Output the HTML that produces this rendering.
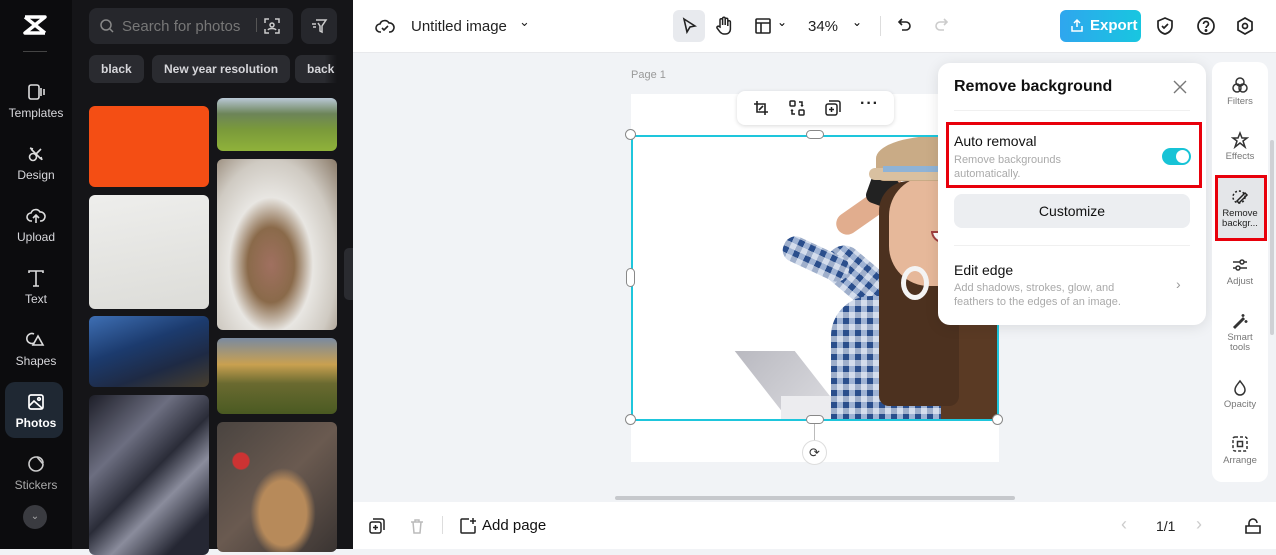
<!DOCTYPE html>
<html><head><style>
*{box-sizing:border-box;margin:0;padding:0}
body{width:1276px;height:549px;overflow:hidden;font-family:"Liberation Sans",sans-serif;background:#f1f3f6;position:relative}
.abs{position:absolute}
#nav{left:0;top:0;width:72px;height:549px;background:#0c0c0e}
#panel{left:72px;top:0;width:281px;height:549px;background:#151518}
.ni{position:absolute;left:0;width:72px;text-align:center;color:#d8d8dc;font-size:12px}
.ni svg{display:block;margin:0 auto 4px}
.chip{position:absolute;top:55px;height:28px;background:#2a2b30;border-radius:7px;color:#d6d6da;font-size:12px;line-height:28px;padding:0 12px;font-weight:bold}
.ph{position:absolute;border-radius:6px;overflow:hidden}
#top{left:353px;top:0;width:923px;height:53px;background:#fff;border-bottom:1px solid #e8e9ec}
#bot{left:353px;top:502px;width:923px;height:47px;background:#fff}
.rs{position:absolute;left:0;width:56px;text-align:center;font-size:9.5px;color:#777;line-height:10px}
.rs svg{display:block;margin:0 auto 3px}
.h{position:absolute;width:11px;height:11px;border-radius:50%;background:#fff;border:1px solid #888}
.chk{background:repeating-linear-gradient(0deg,rgba(255,255,255,.55) 0 6px,transparent 6px 12px),repeating-linear-gradient(90deg,#2a4e8c 0 6px,#9fb3d4 6px 12px)}
</style></head><body>
<div id="nav" class="abs">
 <svg class="abs" style="left:22px;top:14px" width="26" height="22" viewBox="0 0 26 22"><path d="M3 3h20L3 19h20M3 3l20 16" stroke="#fff" stroke-width="3.5" fill="none" stroke-linejoin="round"/></svg>
 <div class="abs" style="left:23px;top:51px;width:24px;height:1px;background:#444"></div>
 <div class="ni" style="top:82px"><svg width="20" height="20" viewBox="0 0 20 20" fill="none" stroke="#ddd" stroke-width="1.6"><rect x="3" y="3" width="10" height="14" rx="2"/><path d="M15 6v8M18 7v6"/></svg>Templates</div>
 <div class="ni" style="top:144px"><svg width="20" height="20" viewBox="0 0 20 20" fill="none" stroke="#ddd" stroke-width="1.6"><circle cx="7" cy="13" r="3.5"/><path d="M5 5l10 10M15 5L9 11M4 4l3 1M16 16l-1-3"/></svg>Design</div>
 <div class="ni" style="top:206px"><svg width="20" height="20" viewBox="0 0 20 20" fill="none" stroke="#ddd" stroke-width="1.6"><path d="M6 15H5a4 4 0 010-8 5 5 0 019-1 4 4 0 011 9h-1M10 17V9M7 12l3-3 3 3"/></svg>Upload</div>
 <div class="ni" style="top:268px"><svg width="20" height="20" viewBox="0 0 20 20" fill="none" stroke="#ddd" stroke-width="1.6"><path d="M3 5V3h14v2M10 3v15M7 18h6"/></svg>Text</div>
 <div class="ni" style="top:330px"><svg width="20" height="20" viewBox="0 0 20 20" fill="none" stroke="#ddd" stroke-width="1.6"><path d="M8 4a5 5 0 100 9M12 6l5 9H7z"/></svg>Shapes</div>
 <div class="abs" style="left:5px;top:382px;width:58px;height:56px;border-radius:10px;background:#1f2833"></div>
 <div class="ni" style="top:392px;color:#fff;font-weight:bold"><svg width="20" height="20" viewBox="0 0 20 20" fill="none" stroke="#fff" stroke-width="1.7"><rect x="3" y="3" width="14" height="14" rx="2"/><path d="M3 14l5-5 9 8"/><circle cx="13" cy="7" r="1.3"/></svg>Photos</div>
 <div class="ni" style="top:454px;color:#aaa"><svg width="20" height="20" viewBox="0 0 20 20" fill="none" stroke="#ccc" stroke-width="1.6"><path d="M10 3a7 7 0 107 7l-6-7z"/><path d="M11 3a6 6 0 016 6"/></svg>Stickers</div>
 <div class="abs" style="left:23px;top:505px;width:24px;height:24px;border-radius:50%;background:#3a3b40;color:#aaa;font-size:10px;text-align:center;line-height:24px">⌄</div>
</div>
<div id="panel" class="abs">
 <div class="abs" style="left:17px;top:8px;width:204px;height:36px;background:#26272c;border-radius:8px"></div>
 <svg class="abs" style="left:27px;top:18px" width="16" height="16" viewBox="0 0 16 16" fill="none" stroke="#888" stroke-width="1.5"><circle cx="7" cy="7" r="5"/><path d="M11 11l3 3"/></svg>
 <div class="abs" style="left:50px;top:18px;color:#777;font-size:15px">Search for photos</div>
 <div class="abs" style="left:184px;top:18px;width:1px;height:14px;background:#555"></div>
 <svg class="abs" style="left:191px;top:17px" width="18" height="18" viewBox="0 0 18 18" fill="none" stroke="#ccc" stroke-width="1.5"><path d="M2 6V2h4M12 2h4v4M16 12v4h-4M6 16H2v-4"/><circle cx="9" cy="8" r="2"/><path d="M5 13c1-2 7-2 8 0"/></svg>
 <div class="abs" style="left:229px;top:8px;width:36px;height:36px;background:#26272c;border-radius:8px"></div>
 <svg class="abs" style="left:238px;top:17px" width="18" height="18" viewBox="0 0 18 18" fill="none" stroke="#ccc" stroke-width="1.5"><path d="M6 3h10l-4 6v6l-2-1V9L8 6M2 7h4M3 10h3"/></svg>
 <div class="chip" style="left:17px">black</div>
 <div class="chip" style="left:80px">New year resolution</div>
 <div class="chip" style="left:223px;width:42px;padding:0 0 0 12px;border-radius:7px 0 0 7px;overflow:hidden;background:linear-gradient(90deg,#2a2b30 70%,#151518)">back</div>
 <div class="ph" style="left:17px;top:106px;width:120px;height:81px;background:#f44e14"></div>
 <div class="ph" style="left:17px;top:195px;width:120px;height:114px;background:linear-gradient(170deg,#eeeeec,#dcdcd8)"></div>
 <div class="ph" style="left:17px;top:316px;width:120px;height:71px;background:linear-gradient(160deg,#3e6fb4 0%,#1c3b6e 40%,#1e2a44 70%,#473e2e 100%)"></div>
 <div class="ph" style="left:17px;top:395px;width:120px;height:160px;background:linear-gradient(135deg,#1d1e28,#6c6e80 30%,#2a2c38 50%,#8a8c9c 65%,#252733 85%)"></div>
 <div class="ph" style="left:145px;top:98px;width:120px;height:53px;background:linear-gradient(180deg,#b9c8d6 0%,#6c8458 30%,#7a9a3a 60%,#8fb23a 100%)"></div>
 <div class="ph" style="left:145px;top:159px;width:120px;height:171px;background:radial-gradient(ellipse at 45% 62%,#a07060 0%,#8a6a4a 25%,#e8e6e2 45%,#cfcac2 70%,#8a7a68 100%)"></div>
 <div class="ph" style="left:145px;top:338px;width:120px;height:76px;background:linear-gradient(180deg,#7a8aa0 0%,#c9a050 35%,#6a6a30 60%,#4a5a22 100%)"></div>
 <div class="ph" style="left:145px;top:422px;width:120px;height:130px;background:radial-gradient(circle at 20% 30%,#c33 0 6%,transparent 7%),radial-gradient(ellipse at 55% 70%,#b78a5a 0 25%,transparent 35%),linear-gradient(135deg,#4a4440,#6a5a50 50%,#3a3432)"></div>
 <div class="abs" style="left:272px;top:248px;width:9px;height:52px;background:#2a2b30;border-radius:5px 0 0 5px"></div>
</div>
<div id="top" class="abs">
 <svg class="abs" style="left:22px;top:17px" width="20" height="18" viewBox="0 0 20 18" fill="none" stroke="#222" stroke-width="1.6"><path d="M6 15H5a4 4 0 010-8 5 5 0 019-1 4 4 0 011 9h-1"/><path d="M7 11l2 2 4-4"/></svg>
 <div class="abs" style="left:58px;top:18px;font-size:15px;color:#222">Untitled image</div>
 <div class="abs" style="left:166px;top:14px;font-size:13px;color:#222">⌄</div>
 <div class="abs" style="left:320px;top:10px;width:32px;height:32px;background:#e8eaee;border-radius:6px"></div>
 <svg class="abs" style="left:328px;top:17px" width="16" height="18" viewBox="0 0 16 18" fill="none" stroke="#222" stroke-width="1.6"><path d="M3 2l11 7-5 1-3 5z"/></svg>
 <svg class="abs" style="left:362px;top:16px" width="18" height="20" viewBox="0 0 18 20" fill="none" stroke="#222" stroke-width="1.5"><path d="M5 11V4a1.3 1.3 0 012.6 0v5V2.5a1.3 1.3 0 012.6 0V9V3.5a1.3 1.3 0 012.6 0V10V6a1.3 1.3 0 012.6 0v7c0 3-2 5-5 5H9c-2 0-3-1-4-2l-3-4a1.3 1.3 0 012-1.5z"/></svg>
 <svg class="abs" style="left:402px;top:18px" width="16" height="16" viewBox="0 0 16 16" fill="none" stroke="#222" stroke-width="1.6"><rect x="1" y="1" width="14" height="14" rx="1"/><path d="M1 5h14M6 5v10"/></svg>
 <div class="abs" style="left:424px;top:15px;font-size:12px">⌄</div>
 <div class="abs" style="left:455px;top:18px;font-size:15px;color:#222">34%</div>
 <div class="abs" style="left:499px;top:15px;font-size:12px">⌄</div>
 <div class="abs" style="left:527px;top:16px;width:1px;height:20px;background:#ddd"></div>
 <svg class="abs" style="left:544px;top:17px" width="16" height="18" viewBox="0 0 16 18" fill="none" stroke="#222" stroke-width="1.6"><path d="M5 2L2 5l3 3M2 5h7a4 4 0 010 8H5"/></svg>
 <svg class="abs" style="left:580px;top:17px" width="16" height="18" viewBox="0 0 16 18" fill="none" stroke="#ccc" stroke-width="1.6"><path d="M11 2l3 3-3 3M14 5H7a4 4 0 000 8h4"/></svg>
 <div class="abs" style="left:707px;top:10px;width:81px;height:32px;border-radius:6px;background:linear-gradient(90deg,#2fa6ee,#18c6e0);color:#fff;font-size:15px;font-weight:bold;line-height:32px;padding-left:30px">Export</div>
 <svg class="abs" style="left:717px;top:18px" width="14" height="15" viewBox="0 0 14 15" fill="none" stroke="#fff" stroke-width="1.5"><path d="M7 9V2M4 5l3-3 3 3M2 8v5h10V8"/></svg>
 <svg class="abs" style="left:803px;top:16px" width="18" height="20" viewBox="0 0 18 20" fill="none" stroke="#222" stroke-width="1.7"><path d="M9 2l7 3v5c0 4-3 7-7 8-4-1-7-4-7-8V5z"/><path d="M6 10l2 2 4-4"/></svg>
 <svg class="abs" style="left:843px;top:16px" width="20" height="20" viewBox="0 0 20 20" fill="none" stroke="#222" stroke-width="1.7"><circle cx="10" cy="10" r="8"/><path d="M7.5 8a2.5 2.5 0 015 0c0 2-2.5 2-2.5 4"/><circle cx="10" cy="14.5" r=".6" fill="#222"/></svg>
 <svg class="abs" style="left:882px;top:16px" width="20" height="20" viewBox="0 0 20 20" fill="none" stroke="#222" stroke-width="1.7"><path d="M10 2l7 4v8l-7 4-7-4V6z"/><circle cx="10" cy="10" r="2.5"/></svg>
</div>
<div class="abs" style="left:631px;top:69px;font-size:11px;color:#999">Page 1</div>
<div class="abs" style="left:631px;top:94px;width:368px;height:368px;background:#fff"></div>
<!-- woman (coords relative to 631,136) -->
<div class="abs" style="left:631px;top:136px;width:367px;height:284px;overflow:hidden">
 <div class="abs" style="left:135px;top:215px;width:60px;height:80px;background:linear-gradient(150deg,#b9b9c0,#e4e4e8);transform:skewX(38deg)"></div>
 <div class="abs" style="left:150px;top:260px;width:130px;height:30px;background:#ececef"></div>
 <div class="abs" style="left:270px;top:160px;width:97px;height:130px;background:#4a3020;border-radius:30px 0 0 0"></div>
 <div class="abs chk" style="left:190px;top:120px;width:70px;height:40px;border-radius:18px;transform:rotate(40deg)"></div>
 <div class="abs chk" style="left:200px;top:160px;width:167px;height:130px;border-radius:40px 20px 0 0"></div>
 <div class="abs chk" style="left:150px;top:110px;width:70px;height:26px;border-radius:12px;transform:rotate(25deg)"></div>
 <div class="abs" style="left:310px;top:60px;width:57px;height:224px;background:#5a3a24"></div>
 <div class="abs" style="left:200px;top:60px;width:80px;height:22px;background:#e1ad8e;border-radius:11px;transform:rotate(-35deg)"></div>
 <div class="abs" style="left:237px;top:40px;width:30px;height:30px;background:#222;border-radius:8px;transform:rotate(20deg)"></div>
 <div class="abs" style="left:248px;top:45px;width:80px;height:225px;background:#4c311f;border-radius:30px 30px 10px 10px"></div>
 <div class="abs" style="left:258px;top:40px;width:95px;height:110px;background:#e6b89a;border-radius:40px 50px 40px 40px"></div>
 <div class="abs" style="left:300px;top:95px;width:34px;height:12px;background:#fff;border-radius:0 0 14px 14px;border:2px solid #a04040"></div>
 <div class="abs" style="left:270px;top:130px;width:28px;height:34px;border:5px solid #f4f4f4;border-radius:50%"></div>
 <div class="abs" style="left:245px;top:0px;width:122px;height:45px;background:#c9ab86;border-radius:50% 40% 8px 8px"></div>
 <div class="abs" style="left:238px;top:32px;width:129px;height:12px;background:#d9c0a0;border-radius:6px"></div>
 <div class="abs" style="left:252px;top:30px;width:115px;height:6px;background:#8fb3d6"></div>
</div>
<div class="abs" style="left:631px;top:135px;width:368px;height:286px;border:2px solid #1ec6dc"></div>
<div class="h" style="left:625px;top:129px"></div><div class="h" style="left:992px;top:129px"></div>
<div class="h" style="left:625px;top:414px"></div><div class="h" style="left:992px;top:414px"></div>
<div class="abs" style="left:806px;top:130px;width:18px;height:9px;border-radius:5px;background:#fff;border:1px solid #888"></div>
<div class="abs" style="left:806px;top:415px;width:18px;height:9px;border-radius:5px;background:#fff;border:1px solid #888"></div>
<div class="abs" style="left:626px;top:268px;width:9px;height:19px;border-radius:5px;background:#fff;border:1px solid #888"></div>
<div class="abs" style="left:814px;top:424px;width:1px;height:18px;background:#bbb"></div>
<div class="abs" style="left:802px;top:440px;width:25px;height:25px;border-radius:50%;background:#fff;border:1px solid #ddd;text-align:center;line-height:23px;font-size:13px;color:#333">⟳</div>
<div class="abs" style="left:737px;top:91px;width:157px;height:34px;background:#fff;border-radius:8px;box-shadow:0 1px 4px rgba(0,0,0,.15)"></div>
<svg class="abs" style="left:753px;top:100px" width="16" height="16" viewBox="0 0 16 16" fill="none" stroke="#222" stroke-width="1.6"><path d="M4 1v11h11M1 4h11v11M6 10l4-4"/></svg>
<svg class="abs" style="left:789px;top:100px" width="16" height="16" viewBox="0 0 16 16" fill="none" stroke="#222" stroke-width="1.5"><rect x="1" y="1" width="5" height="5" rx="1"/><rect x="10" y="10" width="5" height="5" rx="1"/><path d="M10 2h3v4M12 5l1 1 1-1M6 14H3v-4M2 11l1-1 1 1"/></svg>
<svg class="abs" style="left:825px;top:100px" width="16" height="16" viewBox="0 0 16 16" fill="none" stroke="#222" stroke-width="1.5"><rect x="1" y="4" width="11" height="11" rx="2"/><path d="M4 1h9a2 2 0 012 2v9M6.5 7v5M4 9.5h5"/></svg>
<div class="abs" style="left:860px;top:95px;font-size:16px;font-weight:bold;color:#222;letter-spacing:1px">···</div>
<!-- popup -->
<div class="abs" style="left:938px;top:63px;width:268px;height:262px;background:#fff;border-radius:12px;box-shadow:0 2px 14px rgba(0,0,0,.1)"></div>
<div class="abs" style="left:954px;top:78px;font-size:16px;font-weight:bold;color:#111">Remove background</div>
<svg class="abs" style="left:1173px;top:80px" width="14" height="14" viewBox="0 0 14 14" stroke="#777" stroke-width="1.4"><path d="M1 1l12 12M13 1L1 13"/></svg>
<div class="abs" style="left:954px;top:110px;width:236px;height:1px;background:#f0f0f0"></div>
<div class="abs" style="left:946px;top:122px;width:256px;height:66px;border:3px solid #e8000b"></div>
<div class="abs" style="left:954px;top:133px;font-size:14px;color:#111">Auto removal</div>
<div class="abs" style="left:954px;top:153px;font-size:11px;color:#aaa;line-height:14px">Remove backgrounds<br>automatically.</div>
<div class="abs" style="left:1162px;top:148px;width:29px;height:17px;border-radius:9px;background:#17c3d6"><div class="abs" style="left:14px;top:2px;width:13px;height:13px;border-radius:50%;background:#fff"></div></div>
<div class="abs" style="left:954px;top:194px;width:236px;height:34px;border-radius:8px;background:#eceef1;text-align:center;line-height:34px;font-size:14px;color:#111">Customize</div>
<div class="abs" style="left:954px;top:245px;width:236px;height:1px;background:#f0f0f0"></div>
<div class="abs" style="left:954px;top:262px;font-size:14px;color:#111">Edit edge</div>
<div class="abs" style="left:954px;top:281px;font-size:11px;color:#aaa;line-height:14px">Add shadows, strokes, glow, and<br>feathers to the edges of an image.</div>
<div class="abs" style="left:1176px;top:276px;font-size:14px;color:#999">›</div>
<!-- right sidebar -->
<div class="abs" style="left:1212px;top:62px;width:56px;height:420px;background:#fff;border-radius:10px"></div>
<div class="abs" style="left:1270px;top:140px;width:4px;height:195px;background:#cfd1d5;border-radius:2px"></div>
<div class="abs" style="left:1218px;top:178px;width:47px;height:60px;background:#e4e6e9"></div>
<div class="abs" style="left:1215px;top:175px;width:52px;height:66px;border:3px solid #e8000b"></div>
<div class="rs" style="left:1212px;top:76px"><svg width="18" height="18" viewBox="0 0 18 18" fill="none" stroke="#333" stroke-width="1.5"><circle cx="9" cy="6" r="4"/><circle cx="6" cy="12" r="4"/><circle cx="12" cy="12" r="4"/></svg>Filters</div>
<div class="rs" style="left:1212px;top:131px"><svg width="18" height="18" viewBox="0 0 18 18" fill="none" stroke="#333" stroke-width="1.5"><path d="M9 2l2 5h5l-4 3 2 6-5-4-5 4 2-6-4-3h5z"/></svg>Effects</div>
<div class="rs" style="left:1212px;top:188px;color:#222"><svg width="18" height="18" viewBox="0 0 18 18" fill="none" stroke="#222" stroke-width="1.5"><circle cx="8" cy="9" r="6" stroke-dasharray="2 2"/><path d="M6 13l8-8 2 2-8 8z"/></svg>Remove<br>backgr...</div>
<div class="rs" style="left:1212px;top:256px"><svg width="18" height="18" viewBox="0 0 18 18" fill="none" stroke="#333" stroke-width="1.5"><path d="M2 6h14M2 12h14"/><circle cx="11" cy="6" r="2" fill="#fff"/><circle cx="7" cy="12" r="2" fill="#fff"/></svg>Adjust</div>
<div class="rs" style="left:1212px;top:312px"><svg width="18" height="18" viewBox="0 0 18 18" fill="none" stroke="#333" stroke-width="1.5"><path d="M3 15l9-9 1 1-9 9zM12 2v3M10.5 3.5h3M15 8v3M13.5 9.5h3"/></svg>Smart<br>tools</div>
<div class="rs" style="left:1212px;top:379px"><svg width="18" height="18" viewBox="0 0 18 18" fill="none" stroke="#333" stroke-width="1.5"><path d="M9 2c3 4 5 6 5 9a5 5 0 01-10 0c0-3 2-5 5-9z"/></svg>Opacity</div>
<div class="rs" style="left:1212px;top:435px"><svg width="18" height="18" viewBox="0 0 18 18" fill="none" stroke="#333" stroke-width="1.5" stroke-dasharray="3 2"><rect x="2" y="2" width="14" height="14" rx="2"/><rect x="6.5" y="6.5" width="5" height="5" stroke-dasharray="none"/></svg>Arrange</div>
<div class="abs" style="left:615px;top:496px;width:400px;height:4px;background:#c6c8cc;border-radius:2px"></div>
<div id="bot" class="abs">
 <svg class="abs" style="left:16px;top:16px" width="16" height="16" viewBox="0 0 16 16" fill="none" stroke="#222" stroke-width="1.5"><rect x="1" y="4" width="11" height="11" rx="2"/><path d="M4 1h9a2 2 0 012 2v9M6.5 7v5M4 9.5h5"/></svg>
 <svg class="abs" style="left:56px;top:16px" width="16" height="16" viewBox="0 0 16 16" fill="none" stroke="#bbb" stroke-width="1.5"><path d="M2 4h12M6 4V2h4v2M4 4l1 11h6l1-11"/></svg>
 <div class="abs" style="left:89px;top:14px;width:1px;height:18px;background:#ddd"></div>
 <svg class="abs" style="left:106px;top:15px" width="18" height="18" viewBox="0 0 18 18" fill="none" stroke="#222" stroke-width="1.5"><path d="M10 2H3a1 1 0 00-1 1v12a1 1 0 001 1h12a1 1 0 001-1V9M14 1v6M11 4h6"/></svg>
 <div class="abs" style="left:129px;top:15px;font-size:15px;color:#111">Add page</div>
 <div class="abs" style="left:768px;top:12px;font-size:18px;color:#ccc">‹</div>
 <div class="abs" style="left:803px;top:16px;font-size:14px;color:#222">1/1</div>
 <div class="abs" style="left:843px;top:12px;font-size:18px;color:#ccc">›</div>
 <svg class="abs" style="left:891px;top:15px" width="18" height="18" viewBox="0 0 18 18" fill="none" stroke="#222" stroke-width="1.6"><path d="M2 9h14v7H2zM5 9V6a4 4 0 018 0"/></svg>
</div>
</body></html>
